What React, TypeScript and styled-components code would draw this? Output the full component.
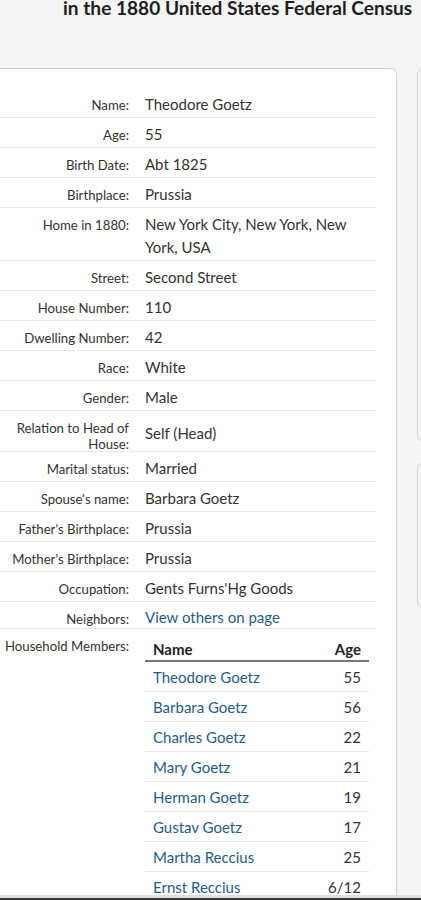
import React from "react";
import styled, { createGlobalStyle } from "styled-components";

const Global = createGlobalStyle`
  html, body { margin: 0; padding: 0; }
  body {
    background: #f4f4f4;
    font-family: Lato, "Open Sans", "Noto Sans", sans-serif;
    color: #333;
    overflow: hidden;
  }
`;

const Page = styled.div`
  width: 421px;
  overflow: hidden;
`;

const Title = styled.h1`
  margin: 0;
  padding: 0 0 0 63px;
  height: 60px;
  box-sizing: border-box;
  font-size: 19.1px;
  line-height: 16px;
  font-weight: 700;
  color: #1e1e1e;
  white-space: nowrap;
`;

const Columns = styled.div`
  display: flex;
  gap: 20px;
  align-items: flex-start;
  margin-top: 8px;
`;

const MainCard = styled.section`
  flex: 0 0 397px;
  box-sizing: border-box;
  background: #fff;
  border: 1px solid #d2d2d2;
  border-left: none;
  border-bottom: none;
  border-top-right-radius: 6px;
  padding: 19px 20px 0 0;
  min-height: 900px;
`;

const Side = styled.aside`
  flex: 0 0 100px;
  display: flex;
  flex-direction: column;
  gap: 22px;
`;

const SideCard = styled.div<{ $h: number }>`
  height: ${(p) => p.$h}px;
  background: #f4f4f4;
  border: 1px solid #d2d2d2;
  border-radius: 6px;
`;

const Row = styled.div<{ $last?: boolean }>`
  display: grid;
  grid-template-columns: 129px 1fr;
  column-gap: 16px;
  align-items: start;
  border-bottom: ${(p) => (p.$last ? "none" : "1px solid #e6e6e6")};
`;

const Label = styled.div`
  text-align: right;
  font-size: 13.2px;
  line-height: 16px;
  color: #333;
  padding: 9px 0 0;
  margin-bottom: -1px;
`;

const Value = styled.div<{ $middle?: boolean; $tight?: boolean }>`
  font-size: 15px;
  line-height: ${(p) => (p.$tight ? 22 : 23)}px;
  color: #333;
  padding: ${(p) => (p.$tight ? "4px 0 0" : "5px 0 1px")};
  align-self: ${(p) => (p.$middle ? "center" : "start")};
`;

const Link = styled.a`
  color: #1f5d8a;
  text-decoration: none;
`;

const Table = styled.table`
  border-collapse: collapse;
  width: 224px;
  margin: 0;
`;

const Th = styled.th<{ $right?: boolean }>`
  text-align: ${(p) => (p.$right ? "right" : "left")};
  font-size: 15px;
  font-weight: 700;
  color: #222;
  line-height: 20px;
  padding: 5px 8px 1px;
  border-bottom: 2px solid #767676;
`;

const Td = styled.td<{ $right?: boolean }>`
  text-align: ${(p) => (p.$right ? "right" : "left")};
  font-size: 15px;
  line-height: 22px;
  padding: 4px 8px 3px;
  border-bottom: 1px solid #e6e6e6;
  color: #333;
`;

const BottomBar = styled.div`
  position: fixed;
  left: 0;
  right: 0;
  bottom: 0;
  height: 2px;
  border-top: 3px solid #dde0e4;
  background: #3a3a3a;
`;

type Fact = { label: string; value: React.ReactNode; middle?: boolean; tight?: boolean };

const facts: Fact[] = [
  { label: "Name:", value: "Theodore Goetz" },
  { label: "Age:", value: "55" },
  { label: "Birth Date:", value: "Abt 1825" },
  { label: "Birthplace:", value: "Prussia" },
  { label: "Home in 1880:", value: "New York City, New York, New York, USA" },
  { label: "Street:", value: "Second Street" },
  { label: "House Number:", value: "110" },
  { label: "Dwelling Number:", value: "42" },
  { label: "Race:", value: "White" },
  { label: "Gender:", value: "Male" },
  { label: "Relation to Head of House:", value: "Self (Head)", middle: true },
  { label: "Marital status:", value: "Married" },
  { label: "Spouse's name:", value: "Barbara Goetz" },
  { label: "Father's Birthplace:", value: "Prussia" },
  { label: "Mother's Birthplace:", value: "Prussia" },
  { label: "Occupation:", value: "Gents Furns'Hg Goods" },
  { label: "Neighbors:", value: <Link href="#">View others on page</Link>, tight: true },
];

const members: [string, string][] = [
  ["Theodore Goetz", "55"],
  ["Barbara Goetz", "56"],
  ["Charles Goetz", "22"],
  ["Mary Goetz", "21"],
  ["Herman Goetz", "19"],
  ["Gustav Goetz", "17"],
  ["Martha Reccius", "25"],
  ["Ernst Reccius", "6/12"],
];

export default function App() {
  return (
    <Page>
      <Global />
      <Title>in the 1880 United States Federal Census</Title>
      <Columns>
        <MainCard>
          {facts.map((f) => (
            <Row key={f.label}>
              <Label>{f.label}</Label>
              <Value $middle={f.middle} $tight={f.tight}>
                {f.value}
              </Value>
            </Row>
          ))}
          <Row $last>
            <Label>Household Members:</Label>
            <Value>
              <Table>
                <thead>
                  <tr>
                    <Th>Name</Th>
                    <Th $right>Age</Th>
                  </tr>
                </thead>
                <tbody>
                  {members.map(([n, a]) => (
                    <tr key={n}>
                      <Td>
                        <Link href="#">{n}</Link>
                      </Td>
                      <Td $right>{a}</Td>
                    </tr>
                  ))}
                </tbody>
              </Table>
            </Value>
          </Row>
        </MainCard>
        <Side>
          <SideCard $h={371} />
          <SideCard $h={143} />
        </Side>
      </Columns>
      <BottomBar />
    </Page>
  );
}
